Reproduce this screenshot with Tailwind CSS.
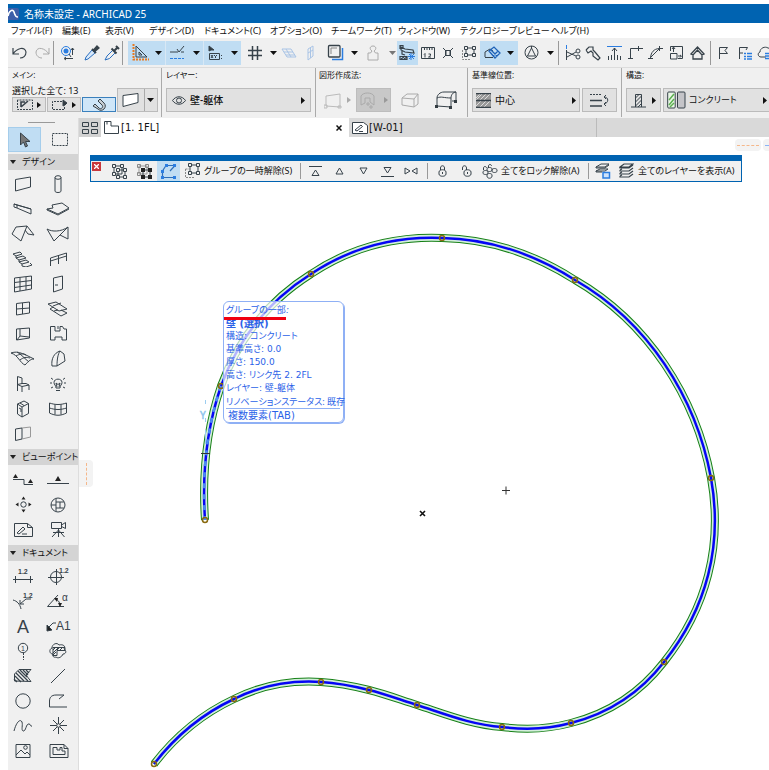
<!DOCTYPE html>
<html lang="ja">
<head>
    <meta charset="utf-8" />
    <meta name="viewport" content="width=device-width, initial-scale=1.0" />
    <title>名称未設定 - ARCHICAD 25</title>
    <script src="https://cdn.jsdelivr.net/npm/@tailwindcss/browser@4"></script>
</head>
<body class="min-h-screen flex flex-col bg-white pl-2 pt-1 overflow-x-hidden font-['Noto_Sans','Noto_Sans_CJK_JP',sans-serif] [font-feature-settings:'palt','kern'] text-[10px] leading-3 text-[#111] whitespace-nowrap [&_svg]:fill-none [&_svg]:stroke-[#37424a] [&_svg]:shrink-0 [&_button]:flex [&_button]:items-center [&_button]:shrink-0">

    <!-- Title bar -->
    <header class="h-[19px] flex items-center gap-1 bg-[#0063b1] text-white">
        <svg width="12" height="14" viewBox="0 0 12 14"><rect x="-3" y="1" width="14" height="12" rx="2" fill="#3c5ea8" stroke="none"/><path d="M0 9C1 3 5 2 6 5s1 5 4 5" stroke="#fff" stroke-width="1.6"/></svg>
        <h1>名称未設定 - ARCHICAD 25</h1>
    </header>

    <!-- Menu -->
    <nav class="h-[15px] flex items-center pl-[3px] text-[9px]">
        <button class="w-[51px]">ファイル(F)</button>
        <button class="w-[43px]">編集(E)</button>
        <button class="w-[44px]">表示(V)</button>
        <button class="w-[55px]">デザイン(D)</button>
        <button class="w-[66px]">ドキュメント(C)</button>
        <button class="w-[61px]">オプション(O)</button>
        <button class="w-[67px]">チームワーク(T)</button>
        <button class="w-[62px]">ウィンドウ(W)</button>
        <button class="w-[91px]">テクノロジープレビュー</button>
        <button>ヘルプ(H)</button>
    </nav>

    <!-- Toolbar -->
    <div class="h-[30px] flex items-center bg-[#f0f0f0] overflow-hidden border-b border-[#dcdcdc] [&>button]:h-6 [&>button]:justify-center [&>span]:shrink-0">
        <button class="w-[23px]" aria-label="Undo"><svg width="18" height="14" viewBox="0 0 18 14"><path d="M2 2v6h6M2 8C6 2 14 0 15 6c0 4-3 6-6 6" stroke-width="1.2"/></svg></button>
        <button class="w-[22px]" aria-label="Redo"><svg width="18" height="14" viewBox="0 0 18 14"><path d="M16 2v6h-6M16 8C12 2 4 0 3 6c0 4 3 6 6 6" stroke="#aaa"/></svg></button>
        <span class="w-px h-6 bg-[#999]"></span>
        <button class="w-[28px]" aria-label="Find and select"><svg width="16" height="16" viewBox="0 0 16 16"><circle cx="6" cy="6" r="4.500" stroke="#2b7de0"/><circle cx="6" cy="6" r="2.500" fill="#2b7de0" stroke="none"/><path d="M12.500 10V3M11 5l1.500-2L14 5M5 13.500h8M6 12l-2 1.500L6 15M9 9l2 3" /></svg></button>
        <button class="w-[19px]" aria-label="Pick up parameters"><svg width="18" height="18" viewBox="0 0 18 18"><path d="M10 5l3 3M2 16l1-3 6-7 3 3-7 6z" stroke="#2b6fc0" fill="#d7e8fa"/><path d="M9 5l4 4M11 6l3-3.500 1.500 1.500L12 7z" fill="#333c42" stroke-width="2"/></svg></button>
        <button class="w-[21px]" aria-label="Inject parameters"><svg width="18" height="18" viewBox="0 0 18 18"><path d="M2 16l2-4 6-6 2.500 2.500-6 6z" stroke="#2b6fc0"/><path d="M8.500 4.500l5 5M11 7l3-3M13 2l3 3" stroke-width="2"/></svg></button>
        <span class="w-px h-6 bg-[#999] mr-[5px]"></span>
        <button class="w-[37px] bg-[#c0ddf3] gap-[6px]" aria-label="Guide lines"><svg width="17" height="17" viewBox="0 0 17 17"><path d="M1.500 0v15.500H17" stroke="#e87a20" stroke-width="2" stroke-dasharray="2 1"/><path d="M4 2v11h11zM7 8v3h3z"/></svg><svg width="7" height="4" viewBox="0 0 7 4"><path d="M0 0h7L3.500 4z" fill="#111" stroke="none"/></svg></button>
        <button class="w-[38px] bg-[#c0ddf3] gap-2 border-l border-[#d8e8f5]" aria-label="Snap guides"><svg width="16" height="16" viewBox="0 0 16 16"><path d="M1 7h8M8 4l2 3 5-6M12 7h3"/><path d="M1 13.500h14" stroke="#2b7de0" stroke-dasharray="3 1"/></svg><svg width="7" height="4" viewBox="0 0 7 4"><path d="M0 0h7L3.500 4z" fill="#111" stroke="none"/></svg></button>
        <button class="w-[38px] bg-[#c0ddf3] gap-2 border-l border-[#d8e8f5]" aria-label="Tracker"><svg width="16" height="16" viewBox="0 0 16 16"><path d="M2 1l5 4H4L2 6z" fill="#333c42"/><path d="M2.500 8.500h10v6h-10zM4 10l2 3m0-3l-2 3m3-3l1.500 1.500L10 10m-1.500 1.500V13M14.500 10v1m0 2v1"/></svg><svg width="7" height="4" viewBox="0 0 7 4"><path d="M0 0h7L3.500 4z" fill="#111" stroke="none"/></svg></button>
        <button class="w-[27px]" aria-label="Grid snap"><svg width="14" height="14" viewBox="0 0 14 14"><path d="M4.500 0v14M9.500 0v14M0 4.500h14M0 9.500h14" stroke-width="1.500"/></svg></button>
        <button class="w-[10px]" aria-label="Grid options"><svg width="7" height="4" viewBox="0 0 7 4"><path d="M0 0h7L3.500 4z" fill="#111" stroke="none"/></svg></button>
        <button class="w-[22px]" aria-label="Editing plane"><svg width="16" height="12" viewBox="0 0 16 12"><path d="M1 2h9l5 8H6zM3 5h9M5 8h9M5 2l5 8" stroke="#a9c4e6"/></svg></button>
        <button class="w-[22px]" aria-label="Vertical plane"><svg width="8" height="16" viewBox="0 0 8 16"><path d="M1 4l5-3v10l-5 4zM3.500 2v11M1 8l5-3" stroke="#a9c4e6"/></svg></button>
        <button class="w-[27px]" aria-label="Trace"><svg width="17" height="17" viewBox="0 0 17 17"><path d="M5 15.500h10.500V4" stroke="#2b7de0" stroke-width="1.500"/><rect x="1.500" y="1.500" width="11.500" height="11.500" rx="1" stroke-width="1.300"/><path d="M4 10V4h6" stroke="#888"/></svg></button>
        <button class="w-[10px]" aria-label="Trace options"><svg width="7" height="4" viewBox="0 0 7 4"><path d="M0 0h7L3.500 4z" fill="#111" stroke="none"/></svg></button>
        <button class="w-[28px]" aria-label="Lock element"><svg width="14" height="16" viewBox="0 0 14 16"><path d="M2 15V8h2.500L6 6C3 4 4 1 7 1s4 3 1 5l1.500 2H12v7z" stroke="#aaa"/></svg></button>
        <button class="w-[10px]" aria-label="Lock options"><svg width="7" height="4" viewBox="0 0 7 4"><path d="M0 0h7L3.500 4z" fill="#777" stroke="none"/></svg></button>
        <button class="w-[21px] bg-[#c0ddf3]" aria-label="Suspend groups"><svg width="17" height="17" viewBox="0 0 17 17"><path d="M2 3l4 2 8 1 1 3-9-1-4-2zM1 1.500h3v3H1zM3 6v4l3 1M1 12.500h7v3H1zM2 15l3-2m0 2l3-2" stroke-width="1.200"/><path d="M12 9v7M9 12.500h7M10 10l5 5m0-5l-5 5" stroke="#2b7de0"/></svg></button>
        <button class="w-[20px]" aria-label="Measure"><svg width="16" height="16" viewBox="0 0 16 16"><path d="M1.500 7V2.500h13V7M4.500 3v2m2.500-2v2m2.500-2v2m2.500-2v2M1.500 7v6.500h13V7M4 9.500l1-1v4M8.500 9h2v1.500l-2 1.500h2.500"/></svg></button>
        <button class="w-[20px]" aria-label="Explode"><svg width="13" height="14" viewBox="0 0 13 14"><path d="M1 2l3 3v4l-3 3M11 2L8 5v4l3 3M3.500 4.500h5v5h-5z"/></svg></button>
        <button class="w-[22px]" aria-label="Group"><svg width="16" height="16" viewBox="0 0 16 16"><path d="M1.500 5v9.500H10" stroke-dasharray="2 1" stroke="#888"/><path d="M5 3h8v7H5z"/><path d="M3.500 1.500h3v3h-3zm8 0h3v3h-3zm0 7h3v3h-3zm-8 0h3v3h-3z" fill="#f0f0f0"/></svg></button>
        <button class="w-[38px] bg-[#c0ddf3] gap-[6px]" aria-label="3D view"><svg width="17" height="16" viewBox="0 0 17 16"><path d="M1 12V7l5-3 3 2M1 12.500h8" /><path d="M5 6l5-4 6 6-5 5zM7 5l6 6M9 11l5-5" stroke="#1d62b8" stroke-width="1.300"/></svg><svg width="7" height="4" viewBox="0 0 7 4"><path d="M0 0h7L3.500 4z" fill="#111" stroke="none"/></svg></button>
        <button class="w-[27px]" aria-label="Renovation"><svg width="15" height="15" viewBox="0 0 15 15"><circle cx="7.500" cy="7.500" r="6.500"/><path d="M7.500 3L3.500 11h8zM7.500 1v2M2 12l1.500-1m8 0l1.500 1"/></svg></button>
        <button class="w-[10px]" aria-label="Renovation options"><svg width="7" height="4" viewBox="0 0 7 4"><path d="M0 0h7L3.500 4z" fill="#111" stroke="none"/></svg></button>
        <span class="w-px h-6 bg-[#999] mx-[3px]"></span>
        <button class="w-[21px]" aria-label="Split"><svg width="16" height="16" viewBox="0 0 16 16"><path d="M1.500 0v4" stroke="#2b7de0"/><path d="M1.500 5v10M2 7l9 4M2 12l9-5"/><circle cx="13" cy="6" r="2"/><circle cx="13" cy="12" r="2"/></svg></button>
        <button class="w-[20px]" aria-label="Adjust"><svg width="16" height="16" viewBox="0 0 16 16"><path d="M1 5l3-3h4v3l2 2M1 5l2 3 3-2 2 2v3l5 4 2-2-5-6" stroke-width="1.200"/></svg></button>
        <button class="w-[22px]" aria-label="Elevate"><svg width="15" height="16" viewBox="0 0 15 16"><path d="M0 1.500h15" stroke="#2b7de0"/><path d="M7.500 3v12M5 6l2.500-3L10 6M1.500 11v4m3-5v5m6-5v5m3-4v4"/></svg></button>
        <button class="w-[20px]" aria-label="Intersect"><svg width="15" height="15" viewBox="0 0 15 15"><path d="M2.500 13V3.500H15M0 13.500h5M10.500 1v5"/></svg></button>
        <button class="w-[21px]" aria-label="Fillet"><svg width="15" height="15" viewBox="0 0 15 15"><path d="M2.500 13C3 7 6 4 11 3.500h4M0 13.500h5M11.500 1v5M3 12l8-8" /></svg></button>
        <button class="w-[21px]" aria-label="Resize"><svg width="15" height="16" viewBox="0 0 15 16"><path d="M4 1.500h9.500v12H9M1.500 6V1.500H4M1.500 8.500H8V14H1.500zM4.500 7V2.500M3 4l1.500-2L6 4M9 11h3m-1-1l1.500 1L11 12.500" /></svg></button>
        <button class="w-[20px]" aria-label="Roof"><svg width="15" height="15" viewBox="0 0 15 15"><path d="M3 9v5h9V9M1 9l6.500-7L14 9l-2 1-4.500-5L3 10z" stroke-width="1.300"/></svg></button>
        <span class="w-px h-6 bg-[#999] mx-[3px]"></span>
        <button class="w-[19px]" aria-label="Flag"><svg width="11" height="13" viewBox="0 0 11 13"><path d="M1.500 13V1.500h8L7 4.500l2.500 3h-8"/></svg></button>
        <button class="w-[23px]" aria-label="Flag list"><svg width="14" height="14" viewBox="0 0 14 14"><path d="M1.500 13V1.500h8L8 4M1.500 7H5"/><path d="M6 7.500h8M6 10.500h8M6 13h8" stroke="#2b7de0" stroke-width="1.500" stroke-dasharray="2 1 9"/></svg></button>
        <button class="w-[18px]" aria-label="Cloud"><svg width="16" height="15" viewBox="0 0 16 15"><path d="M9 12H4C1 12 0 8 3 7c0-4 5-6 8-4 2 0 4 2 4 4"/><path d="M8 8.500h8M8 11h8M8 13.500h8" stroke="#2b7de0" stroke-width="1.500"/></svg></button>
    </div>

    <!-- Info box -->
    <div class="h-[50px] flex bg-[#f0f0f0] overflow-hidden text-[8px] [&_section]:shrink-0 [&_section]:flex [&_section]:flex-col [&_section]:pt-px [&_section]:border-r [&_section]:border-[#aaa] [&_section]:mb-px">
        <section class="w-[154px] pl-1">
            <h2>メイン:</h2>
            <div class="flex gap-px">
                <div>
                    <p class="pt-1 text-[9px] leading-3">選択した全て: 13</p>
                    <div class="flex gap-px [&>button]:h-[15px] [&>button]:w-[34px] [&>button]:border [&>button]:justify-center [&>button]:gap-1">
                        <button class="bg-[#e1e1e1] border-[#bbb]" aria-label="Select all"><svg width="16" height="11" viewBox="0 0 16 11"><path d="M.5 1v9.500h15V1z" stroke-dasharray="2 1"/><path d="M4 8V3h4M4 8l7-6" stroke-width="1.600"/></svg><svg width="4" height="6" viewBox="0 0 4 6"><path d="M0 0v6l4-3z" fill="#111" stroke="none"/></svg></button>
                        <button class="bg-[#e1e1e1] border-[#bbb]" aria-label="Selection area"><svg width="16" height="11" viewBox="0 0 16 11"><path d="M10 2.500H.5v8h12V7" stroke-dasharray="2 1"/><path d="M11 1l4 3-2 2-2 1z" fill="#333c42"/></svg><svg width="4" height="6" viewBox="0 0 4 6"><path d="M0 0v6l4-3z" fill="#111" stroke="none"/></svg></button>
                        <button class="bg-[#cfe6f8] border-[#3a80bd]" aria-label="Magnet"><svg width="14" height="13" viewBox="0 0 14 13"><path d="M3 6l4 4c2 2 5-1 3-3L6 3l2-2 4 4c4 4-2 10-6 6L1 8z" fill="#c7cdd2"/></svg></button>
                    </div>
                </div>
                <button class="mt-[7px] h-6 w-[41px] bg-[#e1e1e1] border border-[#bbb] justify-center gap-1" aria-label="Wall"><svg width="19" height="16" viewBox="0 0 19 16"><path d="M2 3.500l15-2v9l-15 4z" fill="#fff"/></svg><svg width="11" height="22" viewBox="0 0 11 22"><path d="M3 9h7L6.500 13z" fill="#111" stroke="none"/><path d="M.5 0v22" stroke="#aaa"/></svg></button>
            </div>
        </section>
        <section class="w-[154px] pl-1 pr-1">
            <h2>レイヤー:</h2>
            <button class="mt-[7px] h-6 bg-[#e1e1e1] border border-[#bbb] text-[10px] px-[5px] gap-1 font-medium"><svg width="14" height="9" viewBox="0 0 14 9"><path d="M.5 4.500C4-.5 10-.5 13.500 4.500 10 9.500 4 9.500.5 4.500z"/><circle cx="7" cy="4.500" r="2.500"/></svg>壁-躯体<svg class="ml-auto" width="4" height="7" viewBox="0 0 4 7"><path d="M0 0v7l4-3.500z" fill="#111" stroke="none"/></svg></button>
        </section>
        <section class="w-[152px] pl-[3px] pr-1">
            <h2>図形作成法:</h2>
            <div class="mt-[7px] flex [&>button]:h-6 [&>button]:justify-center">
                <button class="w-[37px] gap-1" aria-label="Straight wall"><svg width="19" height="17" viewBox="0 0 19 17"><path d="M2 14V4l14-2v13M2 14l14 1M0 13h3v3H0zm14 1h3v2h-3z" stroke="#bbb"/></svg><svg width="4" height="6" viewBox="0 0 4 6"><path d="M0 0v6l4-3z" fill="#aaa" stroke="none"/></svg></button>
                <button class="w-[35px] gap-2 bg-[#c8c8c8] border border-[#bdbdbd]" aria-label="Curved wall"><svg width="17" height="17" viewBox="0 0 17 17"><path d="M2 13V4c2-4 11-4 13 0v9l-4-3V6H6v5zM8 11h2v2H8zm3 3h2v2h-2z" stroke="#aaa"/></svg><svg width="4" height="6" viewBox="0 0 4 6"><path d="M0 0v6l4-3z" fill="#999" stroke="none"/></svg></button>
                <button class="w-[38px]" aria-label="Trapezoid wall"><svg width="20" height="16" viewBox="0 0 20 16"><path d="M2 6l5-4h11v10l-4 3-12-2zM2 6l12 1v8M14 7l4-5" stroke="#aaa"/></svg></button>
                <button class="w-[34px]" aria-label="Polygonal wall"><svg width="22" height="18" viewBox="0 0 22 18"><path d="M2 15V7c0-3 3-6 7-6h12v9h-4M2 7c4-2 7 0 14 0v9M16 7c0-3 2-6 5-6M2 15l14 1"/><path d="M0 14h3v3H0zm14 1h3v3h-3zm5-6h3v3h-3z" fill="#333c42" stroke="none"/></svg></button>
            </div>
        </section>
        <section class="w-[154px] pl-1 pr-1">
            <h2>基準線位置:</h2>
            <div class="mt-[7px] flex gap-[2px] [&>button]:h-6 [&>button]:bg-[#e1e1e1] [&>button]:border [&>button]:border-[#bbb]">
                <button class="w-[108px] text-[10px] px-[3px] gap-1"><svg width="15" height="15" viewBox="0 0 15 15"><path d="M0 1h15v13H0z" fill="#999" stroke="none"/><path d="M0 5l5-5M0 7l7-7m-3 7l7-7M8 7l7-7M0 13l5-5m-1 6l7-7m-3 7l7-7" stroke="#ddd"/><path d="M0 7.500h15M0 .5h15M0 14.500h15" stroke-width="1.500"/></svg>中心<svg class="ml-auto" width="4" height="7" viewBox="0 0 4 7"><path d="M0 0v7l4-3.500z" fill="#111" stroke="none"/></svg></button>
                <button class="w-[35px] justify-center" aria-label="Flip reference line"><svg width="20" height="15" viewBox="0 0 20 15"><path d="M0 1.500h12" stroke-dasharray="2 1"/><path d="M0 7.500h12M0 13h12" stroke-width="1.600"/><path d="M14 4c5 0 5 6 0 7M16 2l-2 2 2 2m0 3l-2 2 2 2"/></svg></button>
            </div>
        </section>
        <section class="grow pl-1">
            <h2>構造:</h2>
            <div class="mt-[7px] flex gap-[2px] [&>button]:h-6 [&>button]:bg-[#e1e1e1] [&>button]:border [&>button]:border-[#bbb]">
                <button class="w-[35px] justify-center gap-[6px]" aria-label="Basic structure"><svg width="15" height="15" viewBox="0 0 15 15"><path d="M0 14h15M4.500 14V1.500h6V14M4.500 5L8 1.500M4.500 9l6-6M4.500 13l6-6M7 14l3.500-3.500"/></svg><svg width="4" height="7" viewBox="0 0 4 7"><path d="M0 0v7l4-3.500z" fill="#111" stroke="none"/></svg></button>
                <button class="w-[108px] text-[9px] px-[3px] gap-[3px]"><svg width="19" height="18" viewBox="0 0 19 18"><rect x=".7" y="1" width="7.500" height="16" rx="1" fill="#e9f7e6"/><path d="M2 9l5-6M2 14l5-6M3 16l4-4" stroke="#5cb050" stroke-width="1.500"/><rect x="10.500" y="1" width="7.500" height="16" rx="1" fill="#c4c4c8"/></svg>コンクリート<svg class="ml-auto" width="4" height="7" viewBox="0 0 4 7"><path d="M0 0v7l4-3.500z" fill="#111" stroke="none"/></svg></button>
            </div>
        </section>
    </div>

    <div class="grow flex">
        <!-- Toolbox -->
        <aside class="w-[71px] shrink-0 bg-[#f0f0f0] border-r border-[#ddd] [&_h2]:h-4 [&_h2]:bg-[#d4d4d4] [&_h2]:flex [&_h2]:items-center [&_h2]:gap-[6px] [&_h2]:pl-[2px] [&_h2]:text-[9px] [&_button]:h-[25px] [&_button]:justify-center">
            <div class="h-[9px] pt-1 pl-5"><div class="w-[27px] h-px bg-[#999]"></div></div>
            <div class="grid grid-cols-[33px_37px] pb-[2px]">
                <button class="bg-[#c0ddf3] border border-[#a5cdeb]" aria-label="Arrow"><svg width="12" height="16" viewBox="0 0 12 16"><path d="M1.500 1v12l3-3 2 5 2-1-2-4.500H11z" fill="#777"/></svg></button>
                <button aria-label="Marquee"><svg width="16" height="13" viewBox="0 0 16 13"><path d="M.5.5h15v12H.5z" stroke-dasharray="2 1"/></svg></button>
            </div>
            <h2><svg width="6" height="4" viewBox="0 0 6 4"><path d="M0 0h6L3 4z" fill="#222" stroke="none"/></svg>デザイン</h2>
            <div class="grid grid-cols-[30px_40px] pt-px pb-[3px]">
                <button aria-label="Wall"><svg width="18" height="16" viewBox="0 0 18 16"><path d="M1.500 3.500L16.500 1v10L1.500 15z"/></svg></button>
                <button aria-label="Column"><svg width="8" height="18" viewBox="0 0 8 18"><path d="M1 2.500V16c0 2 6 2 6 0V2.500"/><ellipse cx="4" cy="2.500" rx="3" ry="1.800"/></svg></button>
                <button aria-label="Beam"><svg width="20" height="14" viewBox="0 0 20 14"><path d="M1 2l17 5v5L4 6 1 5zM1 2l3 1v3M4 3l14 4"/></svg></button>
                <button aria-label="Slab"><svg width="24" height="14" viewBox="0 0 24 14"><path d="M1 7l6-1-1-3 10-2 7 5-11 6z"/><path d="M1 7v1l11 5 11-6"/></svg></button>
                <button aria-label="Roof"><svg width="24" height="18" viewBox="0 0 24 18"><path d="M1 9l4-7 11-1-6 15zM16 1l7 9-6-1-3-4"/></svg></button>
                <button aria-label="Shell"><svg width="24" height="18" viewBox="0 0 24 18"><path d="M1 4c5 3 14 3 21-2v12L14 10l-6 6zM22 2L14 10M8 16L22 2"/></svg></button>
                <button aria-label="Stair"><svg width="22" height="16" viewBox="0 0 22 16"><path d="M1 3l7-2 2 2-6 2zm3 2v2l7-2 3 2-7 2-3-2m3 2v2l7-2 3 2-7 2-3-2m3 2v2l4 1 6-2-2-2"/></svg></button>
                <button aria-label="Railing"><svg width="19" height="14" viewBox="0 0 19 14"><path d="M1.500 14V6l16-5v8M1.500 9l16-5M9.500 12V4"/></svg></button>
                <button aria-label="Curtain wall"><svg width="20" height="18" viewBox="0 0 20 18"><path d="M1.500 3l17-2v13l-17 3zM1.500 7.500l17-2M1.500 12.500l17-2.500M7 2.500V16M13 2v13"/></svg></button>
                <button aria-label="Door"><svg width="12" height="18" viewBox="0 0 12 18"><path d="M1.500 3l9-2v13l-9 3zM3 10h3"/></svg></button>
                <button aria-label="Window"><svg width="16" height="15" viewBox="0 0 16 15"><path d="M1.500 2.500L14.500 1v11l-13 2zM7.500 2v11M1.500 8l13-1"/></svg></button>
                <button aria-label="Skylight"><svg width="22" height="16" viewBox="0 0 22 16"><path d="M1 3l8-2 11 7-8 2zM6 6l-3 2 11 7 6-3-6-3M6 5l8-3M11 9l-4 1"/></svg></button>
                <button aria-label="Opening"><svg width="16" height="14" viewBox="0 0 16 14"><path d="M1.500 2L14.500 1v10l-13 2zM5 2v7l9 1M5 9l-3 4"/></svg></button>
                <button aria-label="Zone"><svg width="19" height="17" viewBox="0 0 19 17"><path d="M1.500 1.500H6V6h5V1.500h2.500L15 4h2.500v11H13v-3H6v3H1.500zM9 1v3"/></svg></button>
                <button aria-label="Mesh"><svg width="26" height="15" viewBox="0 0 26 15"><path d="M1 2c6-2 9 0 13 1l10 5c-4 0-6 3-9 6C10 12 8 4 1 2zM6 5c4-2 6-3 10-1M10 9c4-3 6-3 10-2M7 1c4 2 8 7 12 10"/></svg></button>
                <button aria-label="Morph"><svg width="17" height="18" viewBox="0 0 17 18"><path d="M2 16C1 9 4 3 10 1l4 3 1 7-8 5zM7 16c0-7 1-12 3-15"/></svg></button>
                <button aria-label="Object"><svg width="16" height="18" viewBox="0 0 16 18"><path d="M2.500 16V1.500L7 3v6M2.500 9.500L7 11.500l7-1.500v5M7 17v-5.500M2.500 9.500L7 8.500h4l3 1.500"/></svg></button>
                <button aria-label="Lamp"><svg width="18" height="16" viewBox="0 0 18 16"><path d="M7 12c0-3-2-3-2-5.500C5 2 13 2 13 6.500c0 2.500-2 2.500-2 5.500zM7 14.500h4M8 11l-1-4 2 1.500L11 7l-1 4M1 7h2m12 0h2M2 2l2 1.500M16 2l-2 1.500M2 12l2-1m12 1l-2-1"/></svg></button>
                <button aria-label="Equipment"><svg width="14" height="18" viewBox="0 0 14 18"><path d="M1.500 4L8 1l4.500 2.500v10L6 17l-4.500-3zM1.500 4L6 7l6.500-3.500M6 7v10M3 8l2 1v3M4 3l4 2.500"/></svg></button>
                <button aria-label="Panel"><svg width="20" height="14" viewBox="0 0 20 14"><path d="M1.500 1c6 2 11 2 17 0v10c-6 3-11 3-17 0zM1.500 6c6 2 11 2 17 0M7 2.500v10M13 2.500v10"/></svg></button>
                <button aria-label="Wall end"><svg width="18" height="16" viewBox="0 0 18 16"><path d="M1.500 3L8 2v11l-6.500 1.500z"/><path d="M8 2l8.500-1v10L8 13" stroke="#999"/></svg></button>
            </div>
            <h2><svg width="6" height="4" viewBox="0 0 6 4"><path d="M0 0h6L3 4z" fill="#222" stroke="none"/></svg>ビューポイント</h2>
            <div class="grid grid-cols-[30px_40px] pt-[2px] pb-[3px]">
                <button aria-label="Section"><svg width="22" height="12" viewBox="0 0 22 12"><path d="M1 5.500h11v5h9"/><path d="M1 4l2.500-4L6 4zm15 5l2.500-4L21 9z" fill="#222" stroke="none"/></svg></button>
                <button aria-label="Elevation"><svg width="22" height="10" viewBox="0 0 22 10"><path d="M0 8.500h22"/><path d="M8 6l3-5 3 5z" fill="#222" stroke="none"/></svg></button>
                <button aria-label="Interior elevation"><svg width="17" height="17" viewBox="0 0 17 17"><circle cx="8.500" cy="8.500" r="2.700"/><path d="M6.500 3.500l2-3 2 3zm0 10l2 3 2-3zM3.500 6.500l-3 2 3 2zm10 0l3 2-3 2z" fill="#222" stroke="none"/></svg></button>
                <button aria-label="Worksheet"><svg width="16" height="16" viewBox="0 0 16 16"><circle cx="8" cy="8" r="7"/><path d="M6 1.500v13M1 8h5m0-3h8M6 11h8M10 5v6"/></svg></button>
                <button aria-label="Detail"><svg width="21" height="16" viewBox="0 0 21 16"><path d="M1.500 1.500h13l5 4v9h-18zM14.500 1.500v4h5M4 11l6-6 2 2-6 5zM9 12h5"/></svg></button>
                <button aria-label="Camera"><svg width="17" height="17" viewBox="0 0 17 17"><path d="M1.500 1.500h10v6h-10zM11.500 4l4-2.500v6l-4-2M8.500 8v8M8.500 9L2 16M8.500 9l6 7M3 11.500h11"/></svg></button>
            </div>
            <h2><svg width="6" height="4" viewBox="0 0 6 4"><path d="M0 0h6L3 4z" fill="#222" stroke="none"/></svg>ドキュメント</h2>
            <div class="grid grid-cols-[30px_40px] pt-[2px] font-['Liberation_Sans',sans-serif] [&_text]:fill-[#37424a] [&_text]:stroke-none">
                <button aria-label="Dimension"><svg width="20" height="16" viewBox="0 0 20 16"><text x="5" y="6" font-size="7" font-weight="bold">1.2</text><path d="M0 11.500h20M2.500 8v7M17.500 8v7"/></svg></button>
                <button aria-label="Level dimension"><svg width="24" height="20" viewBox="0 0 24 20"><circle cx="10" cy="11" r="5.500"/><path d="M2 11.500h16M10.500 3v16"/><text x="13" y="7" font-size="7" font-weight="bold">1.2</text></svg></button>
                <button aria-label="Radial dimension"><svg width="22" height="20" viewBox="0 0 22 20"><path d="M1 9c4 1 7 4 8 9M19 8h-5l-6 5M8 9v4h4"/><text x="11" y="7" font-size="7" font-weight="bold">1.2</text></svg></button>
                <button aria-label="Angle dimension"><svg width="24" height="16" viewBox="0 0 24 16"><path d="M12 2L1.500 13.500H18M9 6c4 1 5 4 5 8"/><path d="M8 5l4 0-1 4zm4 5h4l-2 4z" fill="#222" stroke="none"/><text x="16" y="8" font-size="10">α</text></svg></button>
                <button aria-label="Text"><svg width="18" height="22" viewBox="0 0 18 22"><text x="3" y="18" font-size="18">A</text></svg></button>
                <button aria-label="Label"><svg width="26" height="16" viewBox="0 0 26 16"><path d="M11 5H8l-5 5"/><path d="M2 7l5 5-5 1z" fill="#222"/><text x="11" y="12" font-size="12">A1</text></svg></button>
                <button aria-label="Grid element"><svg width="12" height="18" viewBox="0 0 12 18"><circle cx="6" cy="6" r="4.700"/><path d="M6.500 11v7" stroke-dasharray="2 1"/><text x="4" y="9" font-size="7">1</text></svg></button>
                <button aria-label="Change"><svg width="18" height="17" viewBox="0 0 18 17"><path d="M4 12c-4 0-4-5-1-6 0-4 5-6 7-3 4-1 7 1 5 4 3 2 2 5-1 5-1 3-5 5-7 3-2 1-4-1-3-3zM4 5.500h12v3H8v5H4z"/><path d="M4 8l3-3m-3 6l6-6M8 8l3-3m0 3l3-3M4 13l3-3"/></svg></button>
                <button aria-label="Fill"><svg width="20" height="15" viewBox="0 0 20 15"><path d="M1.500 13V6L6 1.500h12L13 7l5 6.500z"/><path d="M2 8l6 6M3 5l8 8M5 3l10 10M7 2l7 7M10 2l5 5M13 2l3 3M1 11l3 3" stroke-width="1.200"/></svg></button>
                <button aria-label="Line"><svg width="16" height="16" viewBox="0 0 16 16"><path d="M1 15L15 1"/></svg></button>
                <button aria-label="Circle"><svg width="16" height="16" viewBox="0 0 16 16"><circle cx="8" cy="8" r="7.200"/></svg></button>
                <button aria-label="Polyline"><svg width="20" height="14" viewBox="0 0 20 14"><path d="M11 5l5-4H8C3 1 1.500 4 1.500 7v6H19"/></svg></button>
                <button aria-label="Spline"><svg width="20" height="14" viewBox="0 0 20 14"><path d="M1 12C3 4 7-1 9 3c1 3-1 8 1 9 3 1 3-8 6-7 2 0 1 3 3 2"/></svg></button>
                <button aria-label="Hotspot"><svg width="17" height="17" viewBox="0 0 17 17"><path d="M8.500 0v17M0 8.500h17M3 3l11 11M14 3L3 14"/><circle cx="8.500" cy="8.500" r="1.800" fill="#f0f0f0"/></svg></button>
                <button aria-label="Figure"><svg width="16" height="16" viewBox="0 0 16 16"><path d="M1 1.500h14v13H1zM1 12l5-5 4 4 2-2 3 3"/><circle cx="10.500" cy="4.500" r="1.800"/></svg></button>
                <button aria-label="Drawing"><svg width="21" height="16" viewBox="0 0 21 16"><path d="M2 1.500h14l4 4v9H2zM16 1.500v4h4M5 4.500h4V7h3V4.500h2V8h3v3.500H5z"/></svg></button>
            </div>
        </aside>

        <main class="grow min-w-0 flex flex-col">
            <!-- View tabs -->
            <div class="h-[19px] flex bg-[#d9d9d9] font-['DejaVu_Sans','Noto_Sans_CJK_JP',sans-serif]">
                <button class="w-[22px] justify-center bg-[#d2d2d2]" aria-label="Tab overview"><svg width="16" height="12" viewBox="0 0 16 12"><path d="M.5.5h6v4h-6zm9 0h6v4h-6zm-9 7h6v4h-6zm9 0h6v4h-6z"/></svg></button>
                <div class="w-[248px] flex items-center justify-between bg-white pl-[3px] pr-[7px]">
                    <button class="gap-[2px]"><svg width="15" height="13" viewBox="0 0 15 13"><path d="M.5.5H7V5h7.500v7.500H.5zM3 .5v3"/></svg>[1. 1FL]</button>
                    <button aria-label="Close tab"><svg width="6" height="6" viewBox="0 0 6 6"><path d="M.5.5l5 5m0-5l-5 5" stroke="#111" stroke-width="1.500"/></svg></button>
                </div>
                <button class="w-[248px] gap-px pl-[3px] border-r border-[#bbb]"><svg width="16" height="13" viewBox="0 0 16 13"><path d="M.5 1.500h11l4 3v8H.5z" fill="#fff"/><path d="M3 9l6-5 1.500 1.500L5 10zM7 10.500h4"/></svg>[W-01]</button>
            </div>

            <!-- Drawing area -->
            <div class="relative grow min-h-[633px] overflow-hidden bg-white">
                <svg class="absolute left-0 top-0" width="690" height="633" viewBox="79 137 690 633">
                    <defs>
                        <path id="wall" d="M154 764C174 738 202 714 234 699C262 685 290 680 321 682C338 683 353 686 369 690C385 694 401 700 417 705C445 714 472 725 502 727C526 730 549 729 571 723C610 713 640 693 664 662C707 608 723 545 711 478C696 397 648 322 575 280C536 255 490 239 442 238C395 236 350 248 311 274C268 301 238 340 221 386C206 430 202 475 205 520"/>
                        <circle id="node" r="2.500" stroke="#8a6a10" stroke-width="1.500"/>
                    </defs>
                    <use href="#wall" stroke="#168016" stroke-width="8"/>
                    <use href="#wall" stroke="#d3eedb" stroke-width="6"/>
                    <use href="#wall" stroke="#0505f5" stroke-width="2.500"/>
                    <path d="M221 386C206 430 202 475 205 520" stroke="#4a8cf0" stroke-width="2.500" stroke-dasharray="5 6"/>
                    <use href="#node" x="154" y="764"/><use href="#node" x="234" y="699"/><use href="#node" x="321" y="682"/><use href="#node" x="369" y="690"/><use href="#node" x="417" y="705"/><use href="#node" x="502" y="727"/><use href="#node" x="571" y="723"/><use href="#node" x="664" y="662"/><use href="#node" x="711" y="478"/><use href="#node" x="575" y="280"/><use href="#node" x="442" y="238"/><use href="#node" x="311" y="274"/><use href="#node" x="221" y="386"/><use href="#node" x="205" y="520"/>
                    <path d="M205.500 400v4m0 14v4m0 8v14" stroke="#9ccdf0"/>
                    <text x="200" y="419" font-size="10" fill="#8fc5ee" stroke="#8fc5ee" stroke-width=".5">Y</text>
                    <path d="M201 453.500h9M502 490.500h8m-4-4v8" stroke="#333"/>
                    <path d="M420 511l5 5m0-5l-5 5" stroke="#111" stroke-width="1.600"/>
                </svg>

                <!-- Element info tag -->
                <div class="absolute left-36 top-[164px] w-[121px] h-[122px] pl-[2px] pt-[2px] rounded-md border border-[#8fb0f5] shadow-[1px_1px_0_#8fb0f5] bg-white/70 text-[9px] leading-[13px] text-[#2b62e8] font-['DejaVu_Sans','Noto_Sans_CJK_JP',sans-serif]">
                    <p><span class="relative">グループの一部<span class="absolute -left-[2px] right-0 top-3 h-[3px] bg-[#f00010]"></span></span><i>:</i></p>
                    <p class="font-bold text-[10px]">壁 (選択)</p>
                    <p>構造: コンクリート</p>
                    <p>基準高さ: 0.0</p>
                    <p>厚さ: 150.0</p>
                    <p>高さ: リンク先 2. 2FL</p>
                    <p>レイヤー: 壁-躯体</p>
                    <p class="font-['Noto_Sans','Noto_Sans_CJK_JP',sans-serif]">リノベーションステータス: 既存</p>
                    <p class="mr-[3px] pl-[2px] border-t border-[#8fb0f5] text-[10px]">複数要素(TAB)</p>
                </div>

                <!-- Palette drop handles -->
                <div class="absolute left-0 top-[323px] w-[14px] h-[27px] rounded-r bg-[#f3f3f3] flex justify-center items-center"><div class="h-[22px] border-l border-dashed border-[#f5b78a]"></div></div>
                <div class="absolute right-0 top-[2px] h-3 flex gap-[2px] overflow-hidden">
                    <div class="w-[26px] rounded bg-[#f3f3f3] flex items-center justify-center"><div class="w-[22px] border-t border-dashed border-[#f5b78a]"></div></div>
                    <div class="w-[6px] rounded-l bg-[#f3f3f3] flex items-center justify-end"><div class="w-1 border-t border-dashed border-[#8ab4f5]"></div></div>
                </div>

                <!-- Floating palette -->
                <div class="absolute left-[11px] top-[18px] w-[652px] h-[27px] border border-t-[6px] border-[#0063b1] bg-[#f0f0f0] flex items-center text-[9px] [&>button]:h-5 [&>button]:justify-center [&>span]:shrink-0 [&>span]:w-px [&>span]:h-4 [&>span]:bg-[#999]">
                    <button class="self-start w-[9px] !h-[9px] mt-px ml-px bg-[#c8383c]" aria-label="Close palette"><svg width="5" height="5" viewBox="0 0 5 5"><path d="M0 0l5 5M5 0L0 5" stroke="#fff" stroke-width="1.300"/></svg></button>
                    <button class="w-6 ml-[7px]" aria-label="Group"><svg width="16" height="15" viewBox="0 0 16 15"><path d="M2 2h8v8H2zM6 6h7v7H6z"/><path d="M.5.5h3v3h-3zm8 0h3v3h-3zm-8 8h3v3h-3zm4-4h3v3h-3zm7 0h3v3h-3zm0 7h3v3h-3zm-7 0h3v3h-3z" fill="#f0f0f0"/></svg></button>
                    <button class="w-[25px]" aria-label="Ungroup"><svg width="16" height="15" viewBox="0 0 16 15"><path d="M2 2h8v8H2z" stroke="#999"/><path d="M.5.5h3v3h-3zm8 0h3v3h-3zm-8 8h3v3h-3z" stroke="#888"/><path d="M6 6h7v7H6z"/><path d="M4 4h4v4H4zm7 0h4v4h-4zm0 7h4v4h-4zm-7 0h4v4H4z" fill="#222" stroke="none"/></svg></button>
                    <button class="w-[23px] bg-[#c0ddf3]" aria-label="Auto group"><svg width="16" height="16" viewBox="0 0 16 16"><path d="M5 2.500h9L9 8M5 2.500L1.500 8v6.500H14" stroke="#2f6fb8" stroke-width="1.200"/><path d="M4 1h3v3H4zm8 0h3v3h-3zM0 7h3v3H0zm0 6h3v3H0zm12 0h3v3h-3z" fill="#2b7de0" stroke="none"/></svg></button>
                    <button class="w-[120px] !justify-start gap-[3px] pl-1"><svg width="17" height="16" viewBox="0 0 17 16"><path d="M1.500 6v8.500H10M1.500 6H5" stroke="#888" stroke-dasharray="2 1"/><path d="M6 2h8v8H6z"/><path d="M4.500.5h3v3h-3zm8 0h3v3h-3zm-8 8h3v3h-3zm8 0h3v3h-3z" fill="#f0f0f0"/></svg>グループの一時解除(S)</button>
                    <span></span>
                    <button class="w-6 ml-[2px]" aria-label="Bring to front"><svg width="13" height="11" viewBox="0 0 13 11"><path d="M0 .5h13M6.500 4L3 9.500h7z"/></svg></button>
                    <button class="w-6" aria-label="Bring forward"><svg width="9" height="8" viewBox="0 0 9 8"><path d="M4.500 1L1 7h7z"/></svg></button>
                    <button class="w-6" aria-label="Send backward"><svg width="9" height="8" viewBox="0 0 9 8"><path d="M4.500 7L1 1h7z"/></svg></button>
                    <button class="w-6" aria-label="Send to back"><svg width="13" height="11" viewBox="0 0 13 11"><path d="M0 10.500h13M6.500 7L3 1.500h7z"/></svg></button>
                    <button class="w-6" aria-label="Default order"><svg width="14" height="8" viewBox="0 0 14 8"><path d="M1 1v6l5-3zM13 1v6L8 4z"/></svg></button>
                    <span class="ml-1"></span>
                    <button class="w-6 ml-[2px]" aria-label="Lock"><svg width="9" height="12" viewBox="0 0 9 12"><path d="M2.500 5V3c0-3 4-3 4 0v2M1 7c0-3 7-3 7 0v2c0 3-7 3-7 0zM4.500 7v2"/></svg></button>
                    <button class="w-6" aria-label="Unlock"><svg width="11" height="12" viewBox="0 0 11 12"><path d="M1.500 5V3c0-3 4-3 4 0v2M3 7c0-3 7-3 7 0v2c0 3-7 3-7 0zM6.500 7v2"/></svg></button>
                    <button class="w-[110px] !justify-start gap-[3px] pl-1"><svg width="16" height="15" viewBox="0 0 16 15"><path d="M1.500 6V4c0-2 3-2 3 0M6.500 4V2c0-2 3-2 3 0M5 5c0-2 5-2 5 0v1c0 2-5 2-5 0zM1 8c0-2 5-2 5 0v1c0 2-5 2-5 0zM10 6c0-2 5-2 5 0v1c0 2-5 2-5 0zM5 11c0-2 5-2 5 0v1c0 3-5 3-5 0z"/></svg>全てをロック解除(A)</button>
                    <span></span>
                    <button class="w-7" aria-label="Layer settings"><svg width="16" height="16" viewBox="0 0 16 16"><path d="M1 4l5-3h8l-4 3zM1 8l4-2h8l-3 2zM1 4v1h9l4-3M1 8v1h6"/><path d="M8 9.500h6.500V15H8z" stroke="#2b7de0" fill="#cfe3fb" stroke-width="1.500"/></svg></button>
                    <button class="gap-1 pl-[2px]"><svg width="15" height="16" viewBox="0 0 15 16"><path d="M1 4l4-3h9l-4 3zM1 4v1l9 0 4-3M1 7v1l9 0 4-3M1 10v1l9 0 4-3M1 13v1l9 0 4-3M1 7l2-1M1 10l2-1M1 13l2-1" stroke-width="1.200"/></svg>全てのレイヤーを表示(A)</button>
                </div>
            </div>
        </main>
    </div>
</body>
</html>
